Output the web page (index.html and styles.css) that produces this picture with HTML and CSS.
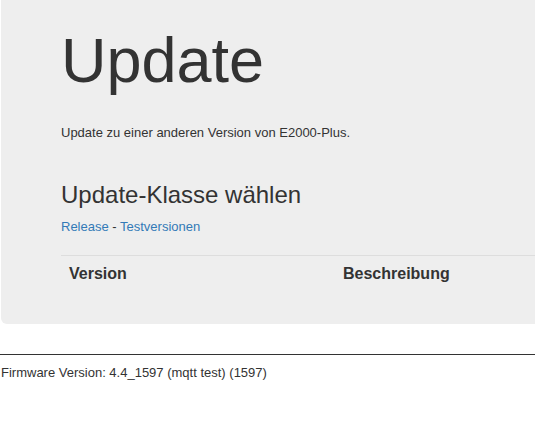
FILE: index.html
```html
<!DOCTYPE html>
<html lang="de">

<head>
  <meta charset="UTF-8">
  <meta name="viewport" content="width=device-width, initial-scale=1.0">
  <title>Update</title>
  <link rel="stylesheet" href="styles.css">
</head>

<body>
  <div class="jumbotron">
    <h1>Update</h1>
    <p class="lead">Update zu einer anderen Version von E2000-Plus.</p>
    <h3>Update-Klasse wählen</h3>
    <p class="classes"><a href="#">Release</a> - <a href="#">Testversionen</a></p>
    <table class="versions">
      <thead>
        <tr>
          <th class="col-version">Version</th>
          <th>Beschreibung</th>
        </tr>
      </thead>
      <tbody></tbody>
    </table>
  </div>

  <hr>
  <footer class="firmware">Firmware Version: 4.4_1597 (mqtt test) (1597)</footer>
</body>

</html>
```

FILE: styles.css
```css
html {
  overflow: hidden;
}

body {
  margin: 0;
  font-family: "Liberation Sans", Arial, sans-serif;
  font-size: 13px;
  line-height: 18px;
  color: #333;
  background: #fff;
}

a {
  color: #337ab7;
  text-decoration: none;
}

.jumbotron {
  margin-left: 1px;
  padding: 26px 0 32px 60px;
  background: #eee;
  border-radius: 0 0 0 6px;
}

.jumbotron h1 {
  margin: 0;
  font-size: 63px;
  line-height: 69px;
  font-weight: 400;
}

.jumbotron .lead {
  margin: 29px 0 0;
}

.jumbotron h3 {
  margin: 40px 0 0;
  font-size: 24px;
  line-height: 26px;
  font-weight: 400;
}

.jumbotron .classes {
  margin: 10px 0 0;
}

.versions {
  margin-top: 19px;
  width: 100%;
  border-collapse: collapse;
  border-spacing: 0;
}

.versions th {
  padding: 8px;
  text-align: left;
  font-size: 16px;
  line-height: 20px;
  font-weight: 700;
  border-top: 1px solid #ddd;
}

.versions .col-version {
  width: 258px;
}

hr {
  margin: 30px 0 0;
  border: 0;
  border-top: 1px solid #333;
  height: 0;
}

.firmware {
  margin-top: 9px;
  margin-left: 1px;
}
```
